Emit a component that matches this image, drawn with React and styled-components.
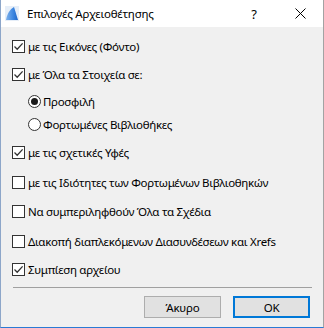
import React from "react";
import styled, { createGlobalStyle } from "styled-components";

const Global = createGlobalStyle`
  html, body { margin: 0; padding: 0; background: #ffffff; }
  body { font-family: "Noto Sans", "Open Sans", sans-serif; }
  * { box-sizing: border-box; }
`;

const Window = styled.div`
  width: 324px;
  height: 328px;
  display: flex;
  flex-direction: column;
  background: #f0f0f0;
  border-left: 1px solid #8da6c9;
  border-right: 1px solid #a3a3a3;
  border-bottom: 1px solid #2a7ad4;
`;

const TitleBar = styled.div`
  height: 27px;
  background: #ffffff;
  display: flex;
  align-items: center;
  padding-left: 4px;
  flex-shrink: 0;
`;

const TitleText = styled.div`
  margin-left: 8px;
  font-size: 11.5px;
  color: #000;
  flex: 1;
  letter-spacing: -0.2px;
`;

const TitleButton = styled.div`
  width: ${(p) => p.$w}px;
  display: flex;
  justify-content: center;
  align-items: center;
  font-size: 13px;
  color: #000;
  height: 27px;
`;

const Body = styled.div`
  flex: 1;
  display: flex;
  flex-direction: column;
  padding: 9px 11px 0 11px;
`;

const Row = styled.label`
  display: flex;
  align-items: center;
  height: 20px;
  margin-top: ${(p) => p.$mt || 0}px;
  padding-left: ${(p) => p.$indent || 0}px;
  font-size: 11.5px;
  color: #000;
  letter-spacing: -0.3px;
`;

const Box = styled.span`
  width: 13px;
  height: 13px;
  border: 1px solid #333333;
  background: #ffffff;
  display: inline-flex;
  align-items: center;
  justify-content: center;
  margin-right: 3px;
  flex-shrink: 0;
`;

const Radio = styled.span`
  width: 13px;
  height: 13px;
  border: 1px solid #333333;
  border-radius: 50%;
  background: #ffffff;
  display: inline-flex;
  align-items: center;
  justify-content: center;
  margin-right: 2px;
  flex-shrink: 0;
`;

const Dot = styled.span`
  width: 7px;
  height: 7px;
  border-radius: 50%;
  background: #1a1a1a;
`;

const Separator = styled.div`
  height: 1px;
  background: #a0a0a0;
  margin-top: 8px;
  margin-left: 1px;
  margin-right: 0;
`;

const ButtonRow = styled.div`
  display: flex;
  justify-content: flex-end;
  gap: 12px;
  margin-top: 8px;
  padding-right: 2px;
`;

const Button = styled.button`
  width: 77px;
  height: 22px;
  font-family: "Noto Sans", "Open Sans", sans-serif;
  font-size: 11.5px;
  letter-spacing: -0.2px;
  color: #000;
  background: #e1e1e1;
  border: ${(p) => (p.$primary ? "2px solid #0078d7" : "1px solid #adadad")};
  padding: 0;
  display: flex;
  align-items: center;
  justify-content: center;
`;

const Check = () => (
  <svg width="11" height="11" viewBox="0 0 11 11">
    <path d="M1.5 5.5 L4.2 8.2 L9.6 2.4" fill="none" stroke="#333" strokeWidth="1.3" />
  </svg>
);

const Checkbox = ({ checked, children, mt }) => (
  <Row $mt={mt}>
    <Box>{checked && <Check />}</Box>
    {children}
  </Row>
);

const RadioRow = ({ selected, children, mt }) => (
  <Row $mt={mt} $indent={16}>
    <Radio>{selected && <Dot />}</Radio>
    {children}
  </Row>
);

const AppIcon = () => (
  <svg width="14" height="15" viewBox="0 0 14 15">
    <defs>
      <linearGradient id="g" x1="0" y1="0" x2="1" y2="0">
        <stop offset="0" stopColor="#7fb2ec" />
        <stop offset="0.6" stopColor="#3c86e0" />
        <stop offset="1" stopColor="#1f66c8" />
      </linearGradient>
    </defs>
    <rect x="0" y="0" width="14" height="15" fill="#e6eef8" />
    <path d="M1 14 C2 8 5 3 9 1 L13 14 Z" fill="url(#g)" />
  </svg>
);

export default function App() {
  return (
    <>
      <Global />
      <Window>
        <TitleBar>
          <AppIcon />
          <TitleText>Επιλογές Αρχειοθέτησης</TitleText>
          <TitleButton $w={46}>?</TitleButton>
          <TitleButton $w={46}>
            <svg width="11" height="11" viewBox="0 0 11 11">
              <path d="M0.5 0.5 L10.5 10.5 M10.5 0.5 L0.5 10.5" stroke="#000" strokeWidth="1" />
            </svg>
          </TitleButton>
        </TitleBar>
        <Body>
          <Checkbox checked>με τις Εικόνες (Φόντο)</Checkbox>
          <Checkbox checked mt={8}>με Όλα τα Στοιχεία σε:</Checkbox>
          <RadioRow selected mt={7}>Προσφιλή</RadioRow>
          <RadioRow mt={3}>Φορτωμένες Βιβλιοθήκες</RadioRow>
          <Checkbox checked mt={8}>με τις σχετικές Υφές</Checkbox>
          <Checkbox mt={10}>με τις Ιδιότητες των Φορτωμένων Βιβλιοθηκών</Checkbox>
          <Checkbox mt={9}>Να συμπεριληφθούν Όλα τα Σχέδια</Checkbox>
          <Checkbox mt={10}>Διακοπή διαπλεκόμενων Διασυνδέσεων και Xrefs</Checkbox>
          <Checkbox checked mt={8}>Συμπίεση αρχείου</Checkbox>
          <Separator />
          <ButtonRow>
            <Button>Άκυρο</Button>
            <Button $primary>OK</Button>
          </ButtonRow>
        </Body>
      </Window>
    </>
  );
}
